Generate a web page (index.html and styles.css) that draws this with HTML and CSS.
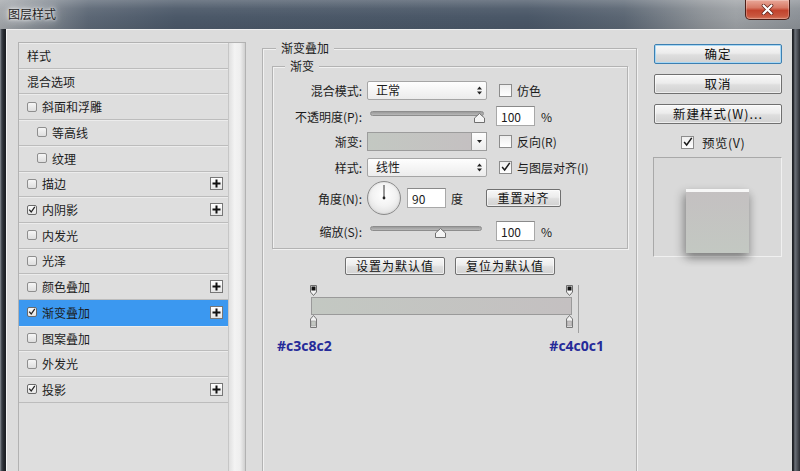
FILE: index.html
```html
<!DOCTYPE html>
<html lang="zh-CN">
<head>
<meta charset="utf-8">
<title>图层样式</title>
<link rel="stylesheet" href="styles.css">
</head>
<body>
<div class="window">
  <header class="titlebar">
    <span class="title">图层样式</span>
    <button class="close" aria-label="关闭">
      <svg width="13" height="11" viewBox="0 0 13 11"><path d="M2.5 1.5 L10.5 9.5 M10.5 1.5 L2.5 9.5" stroke="#5a1d14" stroke-width="3.6" stroke-linecap="round"/><path d="M2.5 1.5 L10.5 9.5 M10.5 1.5 L2.5 9.5" stroke="#fff" stroke-width="2.2" stroke-linecap="round"/></svg>
    </button>
  </header>
  <div class="body">
    <aside class="styles-panel">
      <ul class="style-list">
        <li class="row">样式</li>
        <li class="row">混合选项</li>
        <li class="row"><span class="lcb"></span>斜面和浮雕</li>
        <li class="row sub"><span class="lcb"></span>等高线</li>
        <li class="row sub"><span class="lcb"></span>纹理</li>
        <li class="row"><span class="lcb"></span>描边<span class="plus"><svg width="9" height="9" viewBox="0 0 9 9"><path d="M4.5 0.5V8.5M0.5 4.5H8.5" stroke="#111" stroke-width="2"/></svg></span></li>
        <li class="row"><span class="lcb on"><svg width="10" height="10" viewBox="0 0 10 10"><path d="M1.5 4.5 L4 7.5 L8.5 1" fill="none" stroke="#222" stroke-width="1.6"/></svg></span>内阴影<span class="plus"><svg width="9" height="9" viewBox="0 0 9 9"><path d="M4.5 0.5V8.5M0.5 4.5H8.5" stroke="#111" stroke-width="2"/></svg></span></li>
        <li class="row"><span class="lcb"></span>内发光</li>
        <li class="row"><span class="lcb"></span>光泽</li>
        <li class="row"><span class="lcb"></span>颜色叠加<span class="plus"><svg width="9" height="9" viewBox="0 0 9 9"><path d="M4.5 0.5V8.5M0.5 4.5H8.5" stroke="#111" stroke-width="2"/></svg></span></li>
        <li class="row selected"><span class="lcb on"><svg width="10" height="10" viewBox="0 0 10 10"><path d="M1.5 4.5 L4 7.5 L8.5 1" fill="none" stroke="#222" stroke-width="1.6"/></svg></span>渐变叠加<span class="plus"><svg width="9" height="9" viewBox="0 0 9 9"><path d="M4.5 0.5V8.5M0.5 4.5H8.5" stroke="#111" stroke-width="2"/></svg></span></li>
        <li class="row"><span class="lcb"></span>图案叠加</li>
        <li class="row"><span class="lcb"></span>外发光</li>
        <li class="row"><span class="lcb on"><svg width="10" height="10" viewBox="0 0 10 10"><path d="M1.5 4.5 L4 7.5 L8.5 1" fill="none" stroke="#222" stroke-width="1.6"/></svg></span>投影<span class="plus"><svg width="9" height="9" viewBox="0 0 9 9"><path d="M4.5 0.5V8.5M0.5 4.5H8.5" stroke="#111" stroke-width="2"/></svg></span></li>
      </ul>
      <div class="scrollbar"></div>
    </aside>

    <main class="main">
      <fieldset class="group outer">
        <legend>渐变叠加</legend>
        <fieldset class="group inner">
          <legend>渐变</legend>

          <div class="frow r1">
            <label class="lbl">混合模式:</label>
            <div class="select"><span>正常</span><svg class="updown" width="5" height="9" viewBox="0 0 5 9"><path d="M0 3.5 L2.5 0.5 L5 3.5Z M0 5.5 L2.5 8.5 L5 5.5Z" fill="#222"/></svg></div>
            <span class="chk"><span class="box"></span>仿色</span>
          </div>

          <div class="frow r2">
            <label class="lbl">不透明度(P):</label>
            <div class="slider s-op"><div class="track"></div><svg class="thumb" style="left:104px" width="11" height="10" viewBox="0 0 11 10"><path d="M0.5 9.5 V5 L5.5 0.5 L10.5 5 V9.5 Z" fill="#f4f4f4" stroke="#6f6f6f"/></svg></div>
            <input class="num" type="text" value="100">
            <span class="pct">%</span>
          </div>

          <div class="frow r3">
            <label class="lbl">渐变:</label>
            <div class="grad-pick"><span class="swatch"></span><span class="drop"><svg width="5" height="3" viewBox="0 0 5 3"><path d="M0 0 H5 L2.5 3Z" fill="#222"/></svg></span></div>
            <span class="chk"><span class="box"></span>反向(R)</span>
          </div>

          <div class="frow r4">
            <label class="lbl">样式:</label>
            <div class="select"><span>线性</span><svg class="updown" width="5" height="9" viewBox="0 0 5 9"><path d="M0 3.5 L2.5 0.5 L5 3.5Z M0 5.5 L2.5 8.5 L5 5.5Z" fill="#222"/></svg></div>
            <span class="chk"><span class="box"><svg width="13" height="13" viewBox="0 0 13 13"><path d="M2.5 6 L5.5 9.5 L11.5 1" fill="none" stroke="#1a1a1a" stroke-width="1.8"/></svg></span>与图层对齐(I)</span>
          </div>

          <div class="frow r5">
            <label class="lbl">角度(N):</label>
            <div class="dial"><svg width="32" height="32" viewBox="0 0 32 32"><path d="M16 16 V3" stroke="#333" stroke-width="1"/><circle cx="16" cy="16" r="1.4" fill="#222"/></svg></div>
            <input class="num n-angle" type="text" value="90">
            <span class="deg">度</span>
            <button class="btn b-reset">重置对齐</button>
          </div>

          <div class="frow r6">
            <label class="lbl">缩放(S):</label>
            <div class="slider s-sc"><div class="track"></div><svg class="thumb" style="left:65px" width="11" height="10" viewBox="0 0 11 10"><path d="M0.5 9.5 V5 L5.5 0.5 L10.5 5 V9.5 Z" fill="#f4f4f4" stroke="#6f6f6f"/></svg></div>
            <input class="num n-sc" type="text" value="100">
            <span class="pct">%</span>
          </div>
        </fieldset>

        <div class="defaults">
          <button class="btn b-def">设置为默认值</button>
          <button class="btn b-def">复位为默认值</button>
        </div>

        <div class="grad-editor">
          <div class="stops top">
            <svg width="7" height="11" viewBox="0 0 7 11"><path d="M0.5 0.5 H6.5 V7 L3.5 10.5 L0.5 7 Z" fill="#f2f2f2" stroke="#6d6d6d"/><rect x="1.5" y="1.5" width="4" height="4" fill="#111"/></svg>
            <svg width="7" height="11" viewBox="0 0 7 11"><path d="M0.5 0.5 H6.5 V7 L3.5 10.5 L0.5 7 Z" fill="#f2f2f2" stroke="#6d6d6d"/><rect x="1.5" y="1.5" width="4" height="4" fill="#111"/></svg>
          </div>
          <div class="grad-bar"></div>
          <div class="stops bottom">
            <svg width="7" height="13" viewBox="0 0 7 13"><path d="M0.5 4 L3.5 0.5 L6.5 4 V12.5 H0.5 Z" fill="#f2f2f2" stroke="#777"/><rect x="1.5" y="6" width="4" height="5" fill="#c3c8c2" stroke="#9a9a9a" stroke-width="0.6"/></svg>
            <svg width="7" height="13" viewBox="0 0 7 13"><path d="M0.5 4 L3.5 0.5 L6.5 4 V12.5 H0.5 Z" fill="#f2f2f2" stroke="#777"/><rect x="1.5" y="6" width="4" height="5" fill="#c4c0c1" stroke="#9a9a9a" stroke-width="0.6"/></svg>
          </div>
        </div>

        <div class="hex">
          <span>#c3c8c2</span>
          <span>#c4c0c1</span>
        </div>
      </fieldset>
    </main>

    <aside class="side">
      <button class="btn big primary">确定</button>
      <button class="btn big">取消</button>
      <button class="btn big">新建样式(W)...</button>
      <label class="preview-check"><span class="box"><svg width="13" height="13" viewBox="0 0 13 13"><path d="M2.5 6 L5.5 9.5 L11.5 1" fill="none" stroke="#1a1a1a" stroke-width="1.8"/></svg></span>预览(V)</label>
      <div class="preview"><div class="sample"></div></div>
    </aside>
  </div>
</div>
</body>
</html>
```

FILE: styles.css
```css
* { box-sizing: border-box; }

html, body {
  margin: 0;
  padding: 0;
}

body {
  width: 800px;
  height: 471px;
  overflow: hidden;
  background: #2f343b;
  font-family: "Noto Sans CJK SC", "Noto Sans", sans-serif;
  font-size: 12px;
  color: #1b1b1b;
}

.window {
  width: 800px;
  height: 471px;
  display: flex;
  flex-direction: column;
  background: linear-gradient(90deg, #9a9ea3 0, #50565f 1px, #2b2f35 3px, #1d2025 5px, #2b2f35 calc(100% - 8px), #14161a calc(100% - 7px), #6d727a calc(100% - 5px), #2a2d33 100%);
}

/* ---------- title bar ---------- */
.titlebar {
  height: 29px;
  flex: none;
  display: flex;
  align-items: flex-start;
  padding-left: 8px;
  background:
    linear-gradient(180deg, rgba(255,255,255,0.22) 0, rgba(255,255,255,0.06) 30%, rgba(0,0,0,0) 60%, rgba(0,0,0,0.06) 100%),
    linear-gradient(90deg, #a3a7ab 0, #848b93 5%, #5c6775 11%, #4b5868 22%, #4a5767 66%, #5b6673 78%, #8e9398 88%, #9ca0a4 92%, #8b9096 100%);
}

.title {
  margin-top: 6px;
  font-size: 12px;
  line-height: 16px;
  color: #1e1e1e;
  text-shadow: 0 0 3px #fff, 0 0 7px rgba(255,255,255,0.9), 0 0 12px rgba(255,255,255,0.7);
}

.close {
  margin-left: auto;
  margin-right: 10px;
  width: 45px;
  height: 20px;
  padding: 0;
  border: 1px solid #4b1e17;
  border-top: none;
  border-radius: 0 0 5px 5px;
  background: linear-gradient(180deg, #e9a899 0, #d77a66 40%, #c2432d 55%, #c9573f 85%, #d77a60 100%);
  box-shadow: inset 0 0 0 1px rgba(255,255,255,0.25);
  display: flex;
  align-items: center;
  justify-content: center;
}

/* ---------- body ---------- */
.body {
  flex: 1;
  min-height: 0;
  margin: 0 8px 0 6px;
  border-top: 1px solid #efefef;
  border-left: 1px solid #f5f5f5;
  background: #dcdcdc;
  display: flex;
  align-items: flex-start;
  padding: 10px 0 0 11px;
  overflow: hidden;
}

/* ---------- left style list ---------- */
.styles-panel {
  flex: none;
  margin-top: 2px;
  width: 228px;
  height: 460px;
  border: 1px solid #b2b2b2;
  display: flex;
  background: #dedede;
}

.style-list {
  list-style: none;
  margin: 0;
  padding: 0;
  width: 209px;
  flex: none;
}

.row {
  height: 25.714px;
  display: flex;
  align-items: center;
  padding-left: 8px;
  border-bottom: 1px solid #bcbcbc;
  box-shadow: inset 0 1px 0 #ececec;
  color: #1c1c1c;
  white-space: nowrap;
}

.row.sub { padding-left: 18px; }

.row.selected {
  background: #3b98f0;
  box-shadow: none;
  border-bottom-color: #3b98f0;
}

.lcb {
  width: 10px;
  height: 10px;
  margin-right: 5px;
  border: 1px solid #8e8e8e;
  border-radius: 2px;
  background: linear-gradient(#f6f6f6, #dedede);
  display: flex;
  align-items: center;
  justify-content: center;
  flex: none;
}

.lcb.on {
  border-color: #6a6a6a;
  background: linear-gradient(#fafafa, #e6e6e6);
}

.plus {
  margin-left: auto;
  margin-right: 5px;
  width: 13px;
  height: 13px;
  border: 1px solid #777;
  background: linear-gradient(#ffffff, #e5e5e5);
  display: flex;
  align-items: center;
  justify-content: center;
  flex: none;
}

.scrollbar {
  width: 17px;
  flex: none;
  border-left: 1px solid #c6c6c6;
  background: linear-gradient(90deg, #e0e0e0 0, #f3f3f3 35%, #eeeeee 70%, #d0d0d0 100%);
}

/* ---------- main group ---------- */
.main {
  flex: none;
  margin-left: 16px;
  width: 375px;
}

.group {
  margin: 0;
  border: 1px solid #b3b3b3;
  box-shadow: inset 1px 1px 0 #f1f1f1, 1px 1px 0 #f1f1f1;
  min-inline-size: 0;
}

.group > legend {
  padding: 0 5px;
  line-height: 16px;
  font-size: 12px;
  background: #dcdcdc;
  color: #1b1b1b;
}

.outer {
  width: 375px;
  height: 470px;
  padding: 2px 8px 0 9px;
}

.outer > legend { margin-left: 4px; }

.inner {
  padding: 3px 0 2px 0;
}

.inner > legend { margin-left: 12px; }

.frow {
  display: flex;
  align-items: center;
  white-space: nowrap;
}

.r1 { height: 26px; }
.r2 { height: 26px; }
.r3 { height: 25px; }
.r4 { height: 26px; }
.r5 { height: 36px; }
.r6 { height: 30px; }

.lbl {
  width: 89px;
  margin-right: 5px;
  text-align: right;
  flex: none;
}

.select {
  width: 120px;
  height: 19px;
  flex: none;
  border: 1px solid #a5a5a5;
  border-radius: 2px;
  background: linear-gradient(#fefefe, #ececec);
  display: flex;
  align-items: center;
  justify-content: space-between;
  padding: 0 4px 0 8px;
  line-height: 16px;
}

.chk {
  display: flex;
  align-items: center;
  margin-left: 12px;
}

.box {
  width: 13px;
  height: 13px;
  flex: none;
  margin-right: 5px;
  border: 1px solid #8c8c8c;
  background: linear-gradient(#eeeeee, #ffffff);
  display: flex;
  align-items: center;
  justify-content: center;
  overflow: visible;
}

.slider {
  position: relative;
  height: 14px;
  margin-left: 3px;
  flex: none;
}

.s-op { width: 114px; }
.s-sc { width: 112px; }

.track {
  position: absolute;
  left: 0;
  right: 0;
  top: 2px;
  height: 5px;
  border: 1px solid #8d8d8d;
  border-radius: 3px;
  background: linear-gradient(#9a9a9a, #b9b9b9);
}

.thumb {
  position: absolute;
  top: 4px;
}

.num {
  width: 39px;
  height: 20px;
  flex: none;
  margin: 0 0 0 12px;
  padding: 0 0 0 4px;
  border: 1px solid #a8a8a8;
  border-top-color: #8a8a8a;
  border-radius: 0;
  background: #fff;
  font-family: "Noto Sans CJK SC", "Noto Sans", sans-serif;
  font-size: 12px;
  color: #1b1b1b;
  outline: none;
}

.n-sc { margin-left: 14px; }
.n-angle { margin-left: 6px; }

.pct { margin-left: 6px; }

.grad-pick {
  width: 120px;
  height: 19px;
  flex: none;
  display: flex;
  border: 1px solid #9c9c9c;
}

.swatch {
  flex: 1;
  background: linear-gradient(90deg, #c3c8c2, #c4c0c1);
}

.drop {
  width: 15px;
  border-left: 1px solid #9c9c9c;
  background: linear-gradient(#fefefe, #ececec);
  display: flex;
  align-items: center;
  justify-content: center;
}

.dial {
  width: 34px;
  height: 34px;
  flex: none;
  border-radius: 50%;
  border: 1px solid #8b8b8b;
  background: radial-gradient(circle at 50% 40%, #ffffff 0, #f3f3f3 45%, #d4d4d4 100%);
  box-shadow: inset 0 0 2px rgba(0,0,0,0.15);
}

.dial svg { display: block; }

.deg { margin-left: 5px; }

.btn {
  font-family: "Noto Sans CJK SC", "Noto Sans", sans-serif;
  font-size: 12px;
  color: #111;
  height: 18px;
  padding: 0;
  line-height: 16px;
  border: 1px solid #707070;
  border-radius: 2px;
  background: linear-gradient(#f8f8f8 0, #ececec 45%, #dedede 55%, #d2d2d2 100%);
  box-shadow: inset 0 0 0 1px rgba(255,255,255,0.6);
}

.b-reset {
  width: 75px;
  margin-left: 23px;
  letter-spacing: 1px;
}

.defaults {
  display: flex;
  justify-content: center;
  gap: 10px;
  margin-top: 8px;
}

.b-def {
  width: 100px;
  letter-spacing: 1px;
}

/* ---------- gradient editor ---------- */
.grad-editor {
  margin: 10px 0 0 38px;
  width: 269px;
  height: 48px;
  border-right: 1px solid #a0a0a0;
}

.stops {
  width: 263px;
  display: flex;
  justify-content: space-between;
}

.stops svg { display: block; }

.stops.top { height: 12px; }
.stops.bottom { height: 13px; }

.grad-bar {
  margin: 0 1px;
  width: 261px;
  height: 18px;
  border: 1px solid #9a9a9a;
  background: linear-gradient(90deg, #c3c8c2, #c4c0c1);
}

.hex {
  display: flex;
  justify-content: space-between;
  margin-top: 5px;
  padding: 0 24px 0 5px;
  font-family: "Open Sans", "DejaVu Sans", sans-serif;
  font-weight: 700;
  font-size: 14px;
  line-height: 16px;
  color: #252a99;
}

/* ---------- right column ---------- */
.side {
  flex: none;
  margin-left: 17px;
  margin-top: 4px;
  width: 128px;
  display: flex;
  flex-direction: column;
}

.big {
  width: 128px;
  height: 20px;
  margin-bottom: 10px;
  font-size: 12.5px;
  letter-spacing: 1px;
}

.primary {
  border-color: #3c7fb1;
  box-shadow: inset 0 0 0 1px #a8d8f5;
}

.preview-check {
  display: flex;
  align-items: center;
  height: 14px;
  margin-top: 1px;
  padding-left: 27px;
  font-size: 12.5px;
  letter-spacing: 0.5px;
}

.preview-check .box { margin-right: 8px; }

.preview {
  margin-top: 8px;
  width: 129px;
  margin-left: -1px;
  height: 100px;
  border: 1px solid;
  border-color: #a9a9a9 #f0f0f0 #f0f0f0 #a9a9a9;
  background: #d9d9d9;
  padding-top: 31px;
  display: flex;
  justify-content: center;
}

.sample {
  width: 63px;
  height: 64px;
  background: linear-gradient(0deg, #c3c8c2, #c4c0c1);
  box-shadow: inset 0 3px 0 #f7f7f7, -3px 4px 9px rgba(0,0,0,0.3), 2px 6px 8px rgba(0,0,0,0.18);
}
```
